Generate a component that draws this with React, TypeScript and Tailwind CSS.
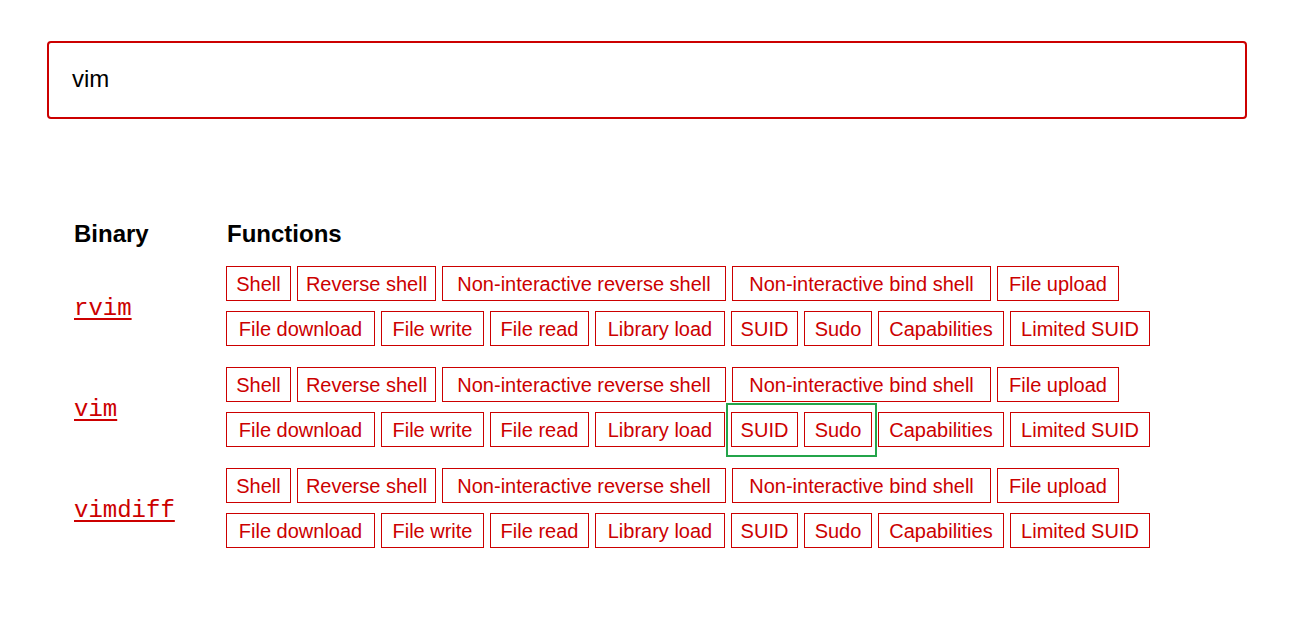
import React from "react";

// outer widths of each tag, taken from the reference
const TAG_W: Record<string, string> = {
  Shell: "w-[65px]",
  "Reverse shell": "w-[139px]",
  "Non-interactive reverse shell": "w-[284px]",
  "Non-interactive bind shell": "w-[259px]",
  "File upload": "w-[122px]",
  "File download": "w-[149px]",
  "File write": "w-[103px]",
  "File read": "w-[99px]",
  "Library load": "w-[130px]",
  SUID: "w-[67px]",
  Sudo: "w-[68px]",
  Capabilities: "w-[126px]",
  "Limited SUID": "w-[140px]",
};

const rowOne = ["Shell", "Reverse shell", "Non-interactive reverse shell", "Non-interactive bind shell", "File upload"];
const rowTwo = ["File download", "File write", "File read", "Library load", "SUID", "Sudo", "Capabilities", "Limited SUID"];

const binaries = ["rvim", "vim", "vimdiff"];

const Tag = ({ label }: { label: string }) => (
  <a
    href="#"
    className={`${TAG_W[label]} h-[35px] flex items-center justify-center border border-[#c00] text-[#c00] text-[20px] whitespace-nowrap`}
  >
    {label}
  </a>
);

const BinaryRow = ({ name }: { name: string }) => (
  <div className="flex">
    <div className="w-[152px] flex items-center pt-[6px]">
      <a
        href="#"
        className="text-[#c00] text-[24px] leading-7 underline decoration-[2px] underline-offset-[3px]"
        style={{ fontFamily: '"Liberation Mono", "DejaVu Sans Mono", monospace' }}
      >
        {name}
      </a>
    </div>
    <div className="relative flex flex-col gap-y-[10px]">
      <div className="flex gap-x-[6px]">
        {rowOne.map((t) => (
          <Tag key={t} label={t} />
        ))}
      </div>
      <div className="flex gap-x-[6px]">
        {rowTwo.map((t) => (
          <Tag key={t} label={t} />
        ))}
      </div>
      {name === "vim" && (
        <div className="absolute left-[500px] top-[36px] w-[151px] h-[54px] border-2 border-[#23a44a] pointer-events-none" />
      )}
    </div>
  </div>
);

export default function App() {
  return (
    <div
      className="min-h-screen bg-white text-black"
      style={{ fontFamily: '"Liberation Sans", Arial, sans-serif' }}
    >
      <div className="w-[1200px] ml-[47px] pt-[41px]">
        <div className="h-[78px] border-2 border-[#c00] rounded-[4px] flex items-center pl-[23px]">
          <span className="text-[24px] pb-[2px]">vim</span>
        </div>

        <div className="pl-[27px] pt-[101px]">
          <div className="flex h-[28px] items-center">
            <div className="w-[152px] text-[24px] font-bold leading-7">Binary</div>
            <div className="text-[24px] font-bold leading-7 pl-px">Functions</div>
          </div>
          <div className="pt-[18px] flex flex-col gap-y-[21px]">
            {binaries.map((b) => (
              <BinaryRow key={b} name={b} />
            ))}
          </div>
        </div>
      </div>
    </div>
  );
}
